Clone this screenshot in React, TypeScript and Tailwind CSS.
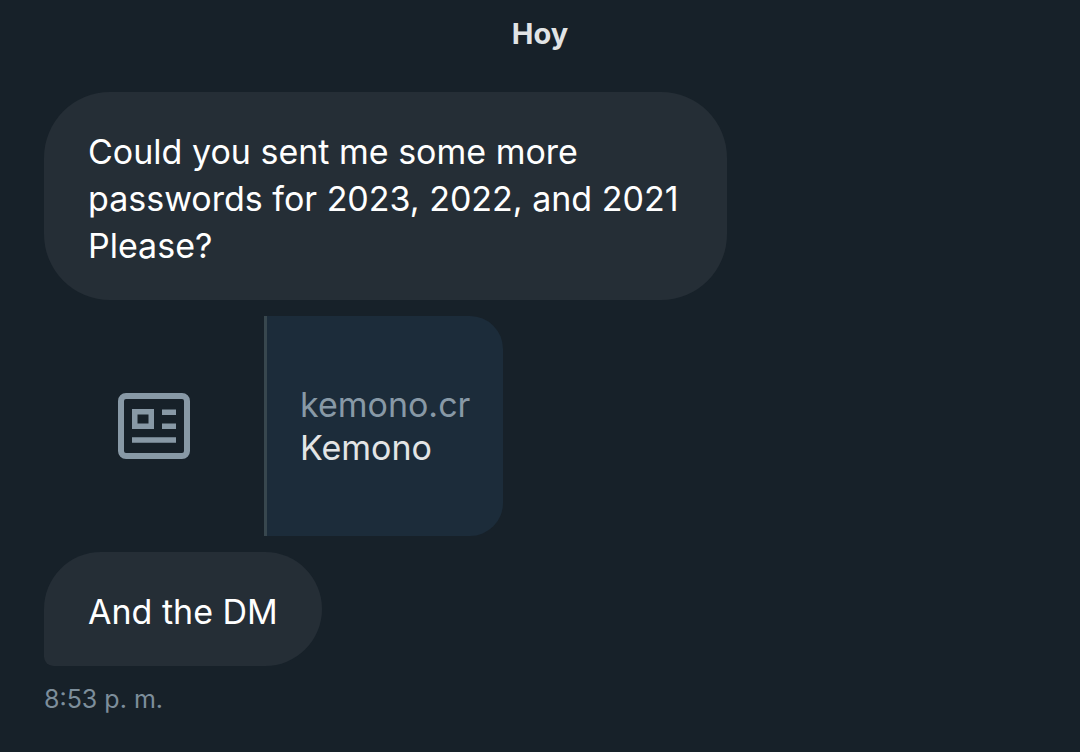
type BubbleProps = {
  text: string;
  isLast?: boolean;
};

function Bubble({ text, isLast = false }: BubbleProps) {
  return (
    <p
      className={`w-fit max-w-[683px] rounded-[66px] bg-[#252e36] px-11 pt-9 pb-[31px] text-[34px] leading-[47px] text-white ${
        isLast ? "rounded-bl-[11px]" : ""
      }`}
    >
      {text}
    </p>
  );
}

function ArticleIcon() {
  return (
    <svg
      viewBox="0 0 72 66"
      className="h-[66px] w-[72px] text-[#8899a6]"
      fill="none"
      stroke="currentColor"
      aria-hidden="true"
    >
      <rect x="3" y="3" width="66" height="60" rx="5" strokeWidth="6" />
      <rect x="16.75" y="18.75" width="16.5" height="14.5" strokeWidth="5.5" />
      <path d="M44 19.25h14M44 33.25h14M14 47h44" strokeWidth="5.5" />
    </svg>
  );
}

function LinkCard() {
  return (
    <a
      href="#kemono"
      className="flex h-[220px] w-fit overflow-hidden rounded-[33px]"
    >
      <div className="flex w-[220px] items-center justify-center">
        <ArticleIcon />
      </div>
      <div className="flex flex-col justify-center border-l-[3px] border-[#38474e] bg-[#1c2c3a] px-[33px] text-[34px] leading-[43px]">
        <span className="text-[#8899a6]">kemono.cr</span>
        <span className="text-[#e3e5e6]">Kemono</span>
      </div>
    </a>
  );
}

function App() {
  return (
    <main className="min-h-screen bg-[#172129] px-11 pt-3 font-['Inter',sans-serif]">
      <h1 className="text-center text-[29px] leading-[44px] font-bold text-[#e1e4e6]">
        Hoy
      </h1>
      <div className="mt-9 flex flex-col gap-4">
        <Bubble text="Could you sent me some more passwords for 2023, 2022, and 2021 Please?" />
        <LinkCard />
        <Bubble text="And the DM" isLast />
      </div>
      <time className="mt-4 block text-[25px] leading-[34px] text-[#7d8e9b]">
        8:53 p. m.
      </time>
    </main>
  );
}

export default App;
